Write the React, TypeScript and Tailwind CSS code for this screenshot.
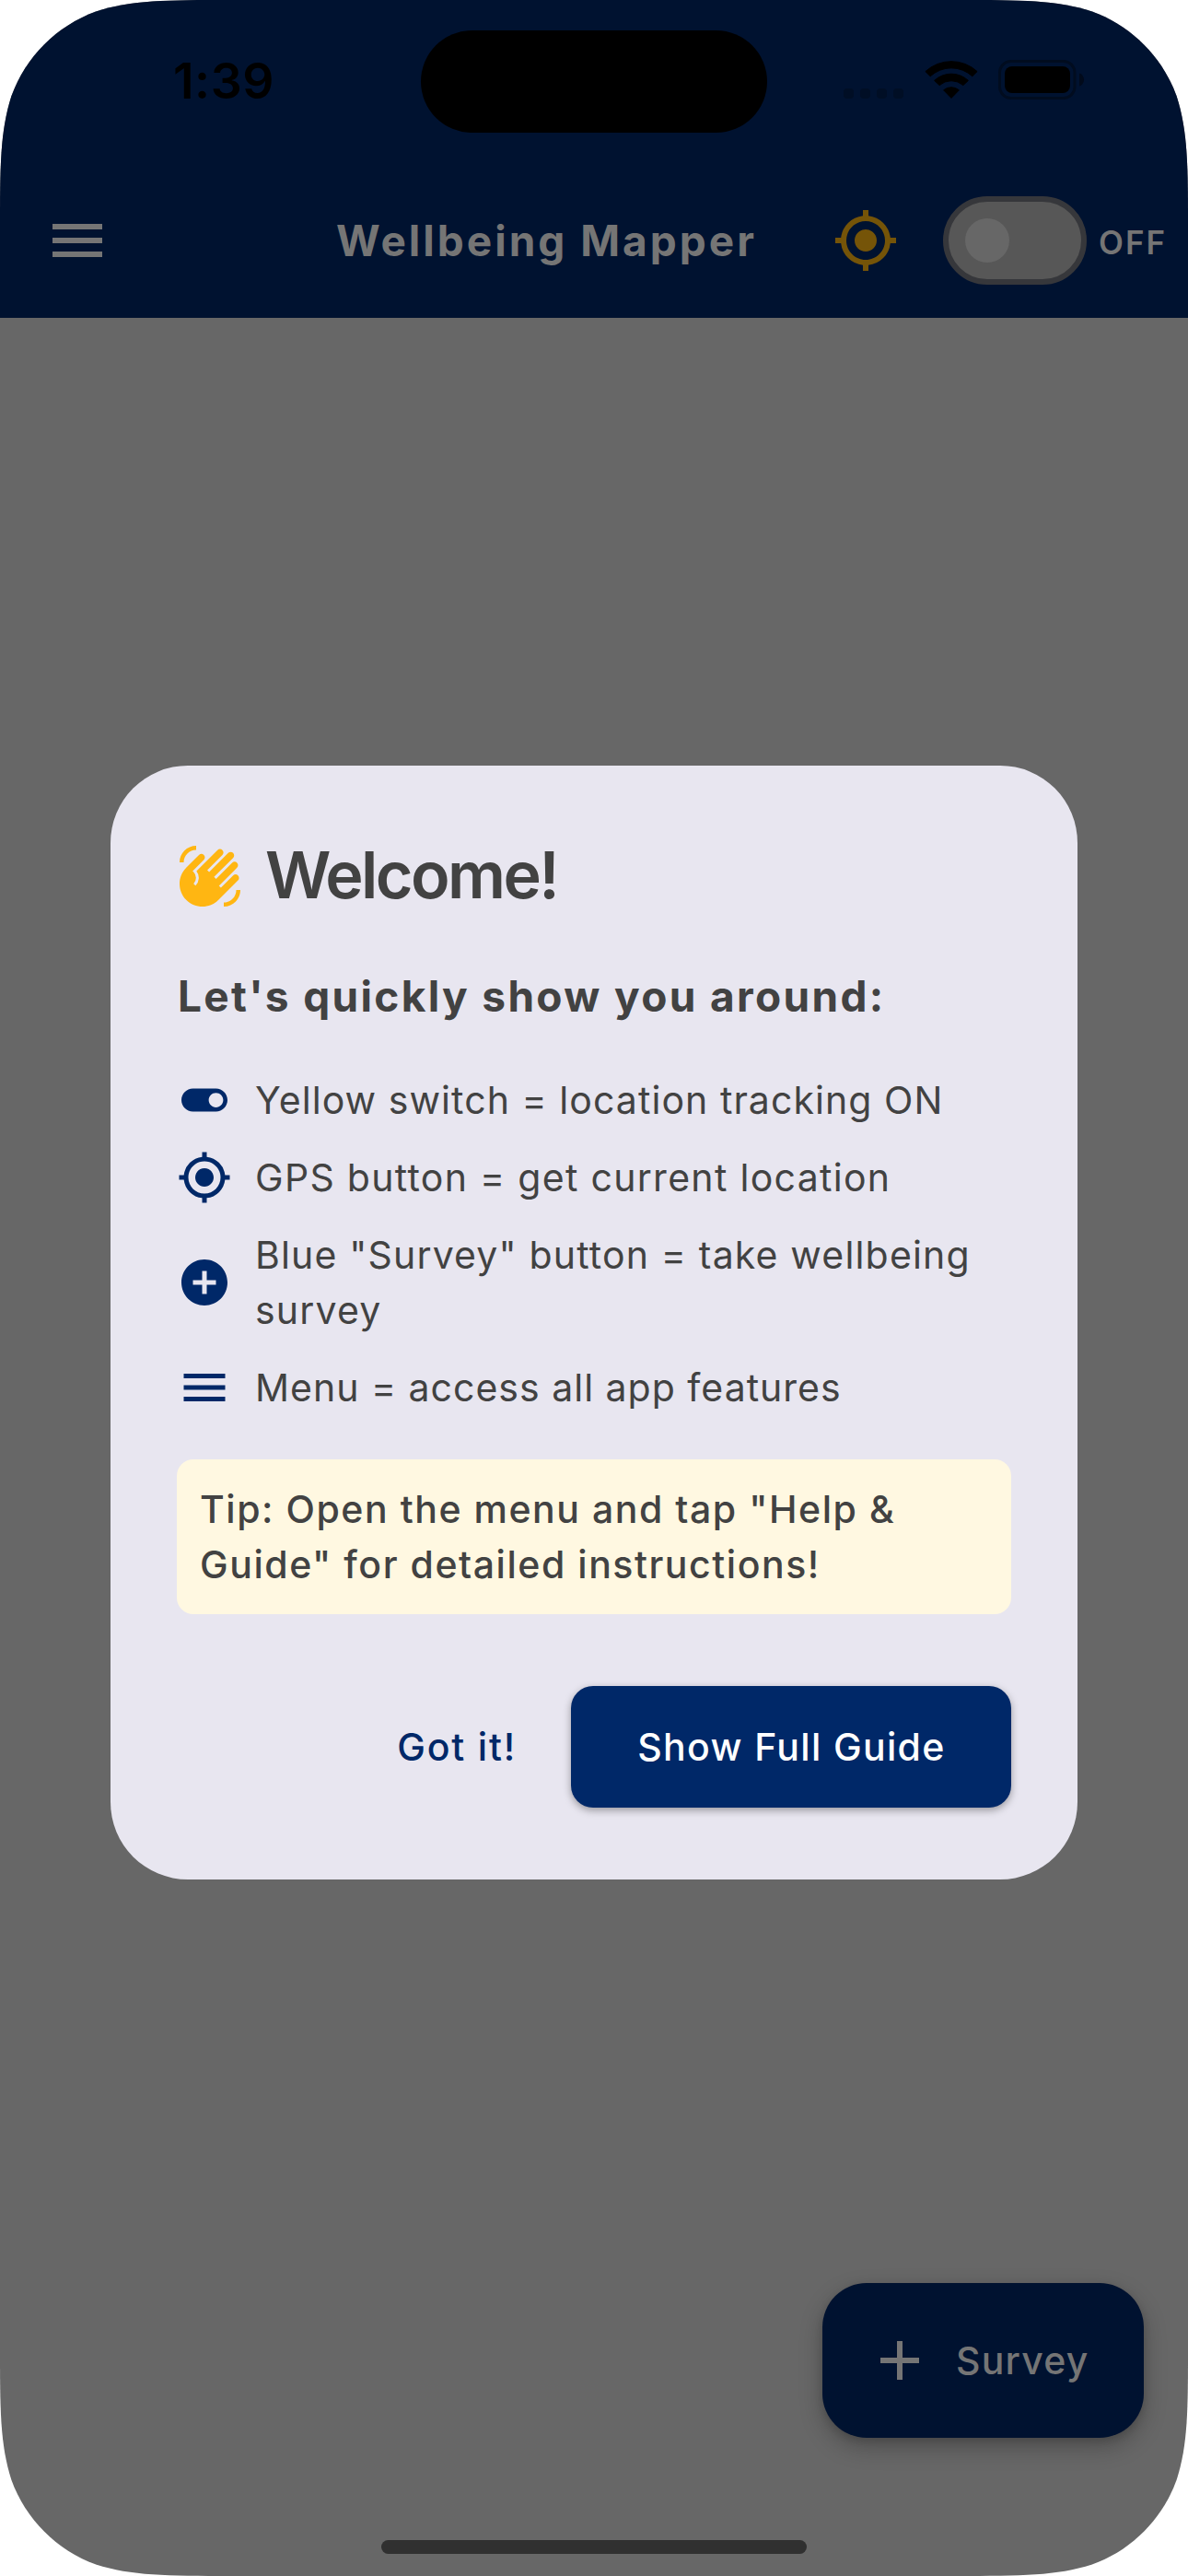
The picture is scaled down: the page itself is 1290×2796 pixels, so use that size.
import type { ReactNode } from "react";
import { MdAdd, MdAddCircle, MdGpsFixed, MdMenu, MdWavingHand } from "react-icons/md";

function CellularDots() {
  return (
    <svg width="65" height="11" viewBox="0 0 65 11" className="mt-[26px] ml-[83px] fill-[#000e25]">
      {[0, 18, 36, 54].map((x) => (
        <rect key={x} x={x} y="0" width="11" height="11" rx="4" />
      ))}
    </svg>
  );
}

function WifiIcon() {
  return (
    <svg width="58" height="43" viewBox="0 0 58 43" className="mb-[5px] ml-[23px] fill-black stroke-black" strokeWidth="1" strokeLinejoin="round">
      <path d="M0.9 12.6A41.5 41.5 0 0 1 57.1 12.6L51.8 17.8A33.5 33.5 0 0 0 6.2 17.8Z" />
      <path d="M10.6 22.4A27 27 0 0 1 47.4 22.4L41.9 27.6A19.5 19.5 0 0 0 16.1 27.6Z" />
      <path d="M20.6 32.8A13 13 0 0 1 37.4 32.8L29 41.4Z" />
    </svg>
  );
}

function BatteryIcon() {
  return (
    <svg width="94" height="44" viewBox="0 0 94 44" className="mb-[4px] ml-[22px]">
      <rect x="1.5" y="1.5" width="81.5" height="40" rx="12.5" fill="none" stroke="#010c1f" strokeWidth="3" />
      <rect x="7" y="7" width="71" height="29" rx="8" fill="#000" />
      <path d="M88 14.500c3.200 1 5 3.800 5 7s-1.800 6-5 7z" fill="#010a1b" />
    </svg>
  );
}

function ToggleOnIcon() {
  return (
    <svg width="60" height="60" viewBox="0 0 24 24" className="shrink-0 fill-current">
      <path d="M17 7H7c-2.760 0-5 2.240-5 5s2.240 5 5 5h10c2.760 0 5-2.240 5-5s-2.240-5-5-5zm0 8.150c-1.740 0-3.150-1.410-3.150-3.150S15.260 8.850 17 8.850s3.150 1.410 3.150 3.150-1.410 3.150-3.150 3.150z" />
    </svg>
  );
}

function StatusBar() {
  return (
    <div className="flex h-[177px] items-center">
      <span className="ml-[188px] w-[269px] pb-px text-[53.5px] leading-[60px] font-semibold tracking-[0.5px] text-black">1:39</span>
      <div className="h-[111px] w-[376px] rounded-full bg-black" />
      <CellularDots />
      <WifiIcon />
      <BatteryIcon />
    </div>
  );
}

function AppBar() {
  return (
    <div className="flex h-[168px] items-center pl-[48px] text-[#757575]">
      <MdMenu size={72} className="shrink-0" />
      <h1 className="ml-[245px] w-[458px] shrink-0 text-[46px] leading-[60px] font-bold tracking-[3px] whitespace-nowrap">
        Wellbeing Mapper
      </h1>
      <MdGpsFixed size={72} className="ml-[81px] shrink-0 text-[#755408]" />
      <div className="ml-[48px] flex h-[96px] w-[156px] shrink-0 items-center rounded-full border-[6px] border-[#36373b] bg-[#575757] pl-[18px]">
        <div className="size-[48px] rounded-full bg-[#676767]" />
      </div>
      <span className="ml-[13px] pt-[3px] text-[35px] leading-[42px] font-semibold tracking-[2px]">OFF</span>
    </div>
  );
}

function Feature({ icon, children }: { icon: ReactNode; children: ReactNode }) {
  return (
    <li className="flex items-center gap-[24px] py-[12px]">
      <span className="shrink-0 text-[#002868]">{icon}</span>
      {children}
    </li>
  );
}

function WelcomeDialog() {
  return (
    <div className="flex h-[1209px] w-[1050px] flex-col rounded-[84px] bg-[#e8e6f0] px-[72px] pt-[72px] text-[#424242]">
      <div className="flex h-[96px] items-center gap-[24px]">
        <MdWavingHand size={72} className="text-[#ffb612]" />
        <h2 className="pb-[3px] text-[70px] leading-[90px] font-semibold tracking-[-2.6px]">Welcome!</h2>
      </div>
      <p className="mt-[48px] pl-px text-[46px] leading-[69px] font-bold tracking-[2.34px]">Let's quickly show you around:</p>
      <ul className="mt-[36px] text-[41px] leading-[60px]">
        <Feature icon={<ToggleOnIcon />}>
          <span className="pl-px tracking-[1.06px]">Yellow switch = location tracking ON</span>
        </Feature>
        <Feature icon={<MdGpsFixed size={60} />}>
          <span className="pl-px tracking-[1.3px]">GPS button = get current location</span>
        </Feature>
        <Feature icon={<MdAddCircle size={60} />}>
          <span className="pl-px tracking-[1.17px]">
            Blue "Survey" button = take wellbeing
            <br />
            survey
          </span>
        </Feature>
        <Feature icon={<MdMenu size={60} />}>
          <span className="pl-px tracking-[1px]">Menu = access all app features</span>
        </Feature>
      </ul>
      <p className="mt-[36px] rounded-[18px] bg-[#fff8e1] p-[24px] pl-[25px] text-[41px] leading-[60px] font-medium tracking-[1.54px]">
        Tip: Open the menu and tap "Help &amp;
        <br />
        Guide" for detailed instructions!
      </p>
      <div className="mt-[78px] flex h-[132px] items-center justify-end text-[41px] leading-[60px] font-medium text-[#002868]">
        <button className="mr-[59px] tracking-[1.8px]">Got it!</button>
        <button className="h-[132px] w-[478px] rounded-[24px] bg-[#002868] pl-px tracking-[1.35px] text-white shadow-[0_3px_9px_rgba(0,0,0,0.35)]">
          Show Full Guide
        </button>
      </div>
    </div>
  );
}

export default function App() {
  return (
    <div className="h-[2796px] w-[1290px] overflow-hidden bg-white font-[Inter,sans-serif]">
      <div className="flex h-full w-full flex-col bg-[#676767] [clip-path:path('M252_0H1038C1110.4_0_1146.7_0_1185.8_12.4C1228.5_27.9_1262.1_61.5_1277.6_104.2C1290_143.3_1290_179.6_1290_252V2544C1290_2616.4_1290_2652.7_1277.6_2691.8C1262.1_2734.5_1228.5_2768.1_1185.8_2783.6C1146.7_2796_1110.4_2796_1038_2796H252C179.6_2796_143.3_2796_104.2_2783.6C61.5_2768.1_27.9_2734.5_12.4_2691.8C0_2652.7_0_2616.4_0_2544V252C0_179.6_0_143.3_12.4_104.2C27.9_61.5_61.5_27.9_104.2_12.4C143.3_0_179.6_0_252_0Z')]">
        <header className="h-[345px] shrink-0 bg-[#001230]">
          <StatusBar />
          <AppBar />
        </header>
        <main className="flex flex-1 flex-col items-center pt-[486px]">
          <WelcomeDialog />
          <button className="mt-[438px] mr-[48px] flex h-[168px] w-[349px] items-center self-end rounded-[48px] bg-[#001230] pl-[48px] text-[#757575] shadow-[0_10px_24px_rgba(0,0,0,0.25),0_3px_8px_rgba(0,0,0,0.12)]">
            <MdAdd size={72} />
            <span className="ml-[25px] text-[41px] leading-[60px] font-medium tracking-[1.2px]">Survey</span>
          </button>
        </main>
        <div className="mb-[24px] h-[15px] w-[462px] shrink-0 self-center rounded-full bg-[#303030]" />
      </div>
    </div>
  );
}
